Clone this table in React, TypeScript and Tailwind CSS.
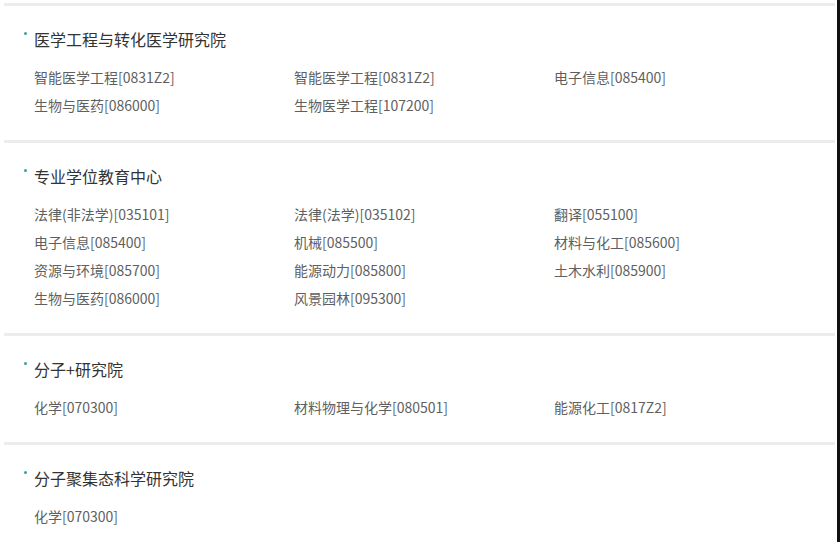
import React from 'react';

interface Section {
    title: string;
    items: string[];
}

const sections: Section[] = [
    {
        title: '医学工程与转化医学研究院',
        items: ['智能医学工程[0831Z2]', '智能医学工程[0831Z2]', '电子信息[085400]', '生物与医药[086000]', '生物医学工程[107200]'],
    },
    {
        title: '专业学位教育中心',
        items: [
            '法律(非法学)[035101]',
            '法律(法学)[035102]',
            '翻译[055100]',
            '电子信息[085400]',
            '机械[085500]',
            '材料与化工[085600]',
            '资源与环境[085700]',
            '能源动力[085800]',
            '土木水利[085900]',
            '生物与医药[086000]',
            '风景园林[095300]',
        ],
    },
    {
        title: '分子+研究院',
        items: ['化学[070300]', '材料物理与化学[080501]', '能源化工[0817Z2]'],
    },
    {
        title: '分子聚集态科学研究院',
        items: ['化学[070300]'],
    },
];

const font = { fontFamily: "'Noto Sans CJK SC', 'Noto Sans', sans-serif" };

const App: React.FC = () => {
    return (
        <div className="w-[840px] h-[542px] overflow-hidden bg-white flex" style={font}>
            <div className="flex-1 pt-[3px]">
                {sections.map((s, idx) => (
                    <div key={idx}>
                        {/* grey divider between blocks */}
                        <div className="ml-[4px] mr-[2px] h-[3px] bg-[#ececec]" />
                        <div className="pl-[24px] pt-[21px] pb-[21px]">
                            <div className="flex items-start">
                                <span className="mt-[5px] mr-[7px] w-[3px] h-[3px] rounded-full bg-[#3a9ea6]" />
                                <h3 className="text-[16px] leading-[24px] text-[#333]">{s.title}</h3>
                            </div>
                            <div className="mt-[12px] pl-[10px] grid grid-cols-[260px_260px_260px]">
                                {s.items.map((it, i) => (
                                    <span key={i} className="text-[14px] leading-[28px] text-[#5f5f5f] whitespace-nowrap">
                                        {it}
                                    </span>
                                ))}
                            </div>
                        </div>
                    </div>
                ))}
            </div>
            <div className="w-[3px] bg-[#111]" />
        </div>
    );
};

export default App;
